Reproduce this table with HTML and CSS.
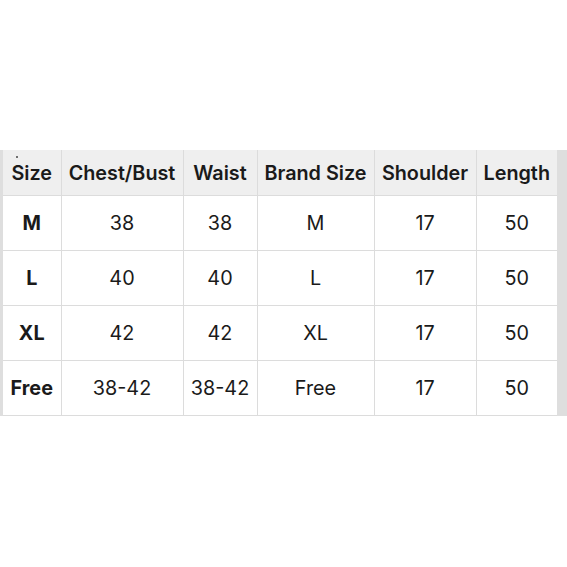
FILE: index.html
```html
<!DOCTYPE html>
<html>
<head>
<meta charset="utf-8">
<link rel="stylesheet" href="styles.css">
</head>
<body>
<div class="page">
  <div class="frame">
    <table class="chart">
      <colgroup>
        <col class="c1"><col class="c2"><col class="c3"><col class="c4"><col class="c5"><col class="c6">
      </colgroup>
      <thead>
        <tr><th><span class="dot"></span>Size</th><th>Chest/Bust</th><th>Waist</th><th>Brand Size</th><th>Shoulder</th><th>Length</th></tr>
      </thead>
      <tbody>
        <tr><td class="sz">M</td><td>38</td><td>38</td><td>M</td><td>17</td><td>50</td></tr>
        <tr><td class="sz">L</td><td>40</td><td>40</td><td>L</td><td>17</td><td>50</td></tr>
        <tr><td class="sz">XL</td><td>42</td><td>42</td><td>XL</td><td>17</td><td>50</td></tr>
        <tr><td class="sz">Free</td><td>38-42</td><td>38-42</td><td>Free</td><td>17</td><td>50</td></tr>
      </tbody>
    </table>
  </div>
</div>
</body>
</html>
```
FILE: styles.css
```css
html, body {
  margin: 0;
  padding: 0;
  background: #ffffff;
}
body {
  font-family: Inter, "Noto Sans", sans-serif;
  color: #1a1a1a;
}
.page {
  width: 567px;
  height: 567px;
  padding-top: 150px;
  box-sizing: border-box;
}
.frame {
  background: #dedede;
  padding: 0 10px 0 3px;
  display: flex;
}
.chart {
  width: 554px;
  table-layout: fixed;
  border-collapse: collapse;
  background: #ffffff;
}
.c1 { width: 58px; }
.c2 { width: 122px; }
.c3 { width: 74px; }
.c4 { width: 117px; }
.c5 { width: 102px; }
.c6 { width: 81px; }
.chart th, .chart td {
  border: 1px solid #dcdcdc;
  text-align: center;
  padding: 0;
  font-size: 19.8px;
  white-space: nowrap;
}
.chart tr:first-child th { border-top: none; }
.chart tr th:first-child, .chart tr td:first-child { border-left: none; }
.chart tr th:last-child, .chart tr td:last-child { border-right: none; }
.chart th {
  background: #efefef;
  font-weight: 600;
  height: 45px;
  position: relative;
}
.chart td {
  height: 54px;
  font-weight: 400;
}
.chart td.sz {
  font-weight: 700;
}
.dot {
  position: absolute;
  left: 13px;
  top: 6px;
  width: 2px;
  height: 2px;
  background: #444;
  border-radius: 1px;
}
```
